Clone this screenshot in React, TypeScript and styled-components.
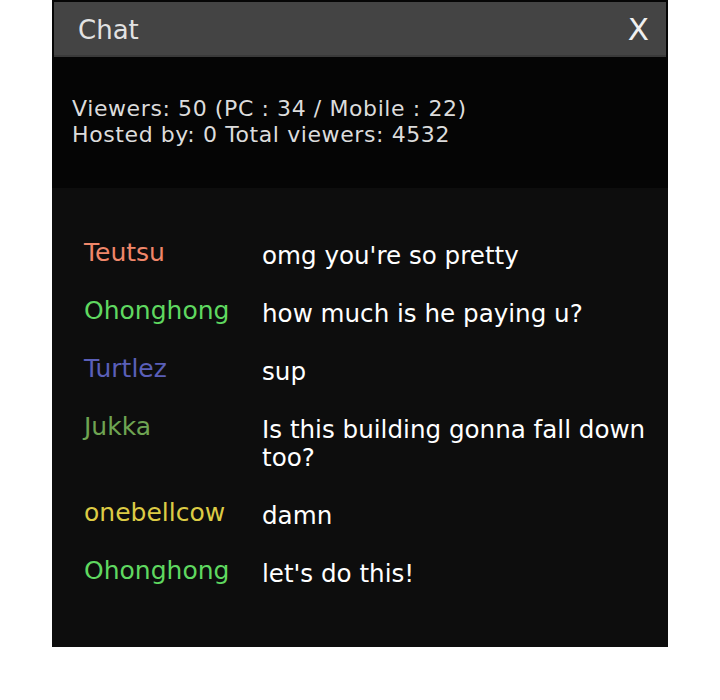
import React from "react";
import styled, { createGlobalStyle } from "styled-components";

const Global = createGlobalStyle`
  html, body { margin: 0; padding: 0; background: #ffffff; }
  body { font-family: "DejaVu Sans", "Open Sans", sans-serif; }
`;

const Page = styled.div`
  padding-left: 52px;
  width: 720px;
  box-sizing: border-box;
`;

const Panel = styled.div`
  width: 616px;
  height: 647px;
  background: #0d0d0d;
  display: flex;
  flex-direction: column;
`;

const Header = styled.div`
  background: #444444;
  border: 2px solid #060606;
  border-bottom: 0;
  height: 57px;
  box-sizing: border-box;
  display: flex;
  align-items: center;
  justify-content: space-between;
  padding: 0 17px 0 24px;
  box-shadow: inset 0 -2px 0 #3a3a3a;
`;

const Title = styled.span`
  color: #e2e2e2;
  font-size: 26px;
  line-height: 1;
`;

const Close = styled.span`
  color: #f0f0f0;
  font-size: 31px;
  line-height: 1;
`;

const Info = styled.div`
  background: #050505;
  height: 131px;
  box-sizing: border-box;
  padding: 39px 10px 0 20px;
  color: #dcdcdc;
  font-size: 22px;
  line-height: 26px;
  letter-spacing: 0.6px;
`;

const Messages = styled.div`
  flex: 1;
  display: grid;
  grid-template-columns: 178px 1fr;
  row-gap: 30px;
  align-content: start;
  padding: 54px 8px 0 32px;
`;

const Name = styled.div<{ $color: string }>`
  color: ${(p) => p.$color};
  font-size: 25px;
  line-height: 28px;
  margin-top: -3px;
`;

const Text = styled.div`
  color: #ffffff;
  font-size: 24.6px;
  line-height: 28px;
`;

const messages = [
  { name: "Teutsu", color: "#f0876a", text: "omg you're so pretty" },
  { name: "Ohonghong", color: "#5fd860", text: "how much is he paying u?" },
  { name: "Turtlez", color: "#5a5fb8", text: "sup" },
  { name: "Jukka", color: "#6ea452", text: "Is this building gonna fall down too?" },
  { name: "onebellcow", color: "#dccb45", text: "damn" },
  { name: "Ohonghong", color: "#5fd860", text: "let's do this!" },
];

export default function App() {
  return (
    <>
      <Global />
      <Page>
        <Panel>
          <Header>
            <Title>Chat</Title>
            <Close>X</Close>
          </Header>
          <Info>
            <div>Viewers: 50 (PC : 34 / Mobile : 22)</div>
            <div>Hosted by: 0 Total viewers: 4532</div>
          </Info>
          <Messages>
            {messages.map((m, i) => (
              <React.Fragment key={i}>
                <Name $color={m.color}>{m.name}</Name>
                <Text>{m.text}</Text>
              </React.Fragment>
            ))}
          </Messages>
        </Panel>
      </Page>
    </>
  );
}
